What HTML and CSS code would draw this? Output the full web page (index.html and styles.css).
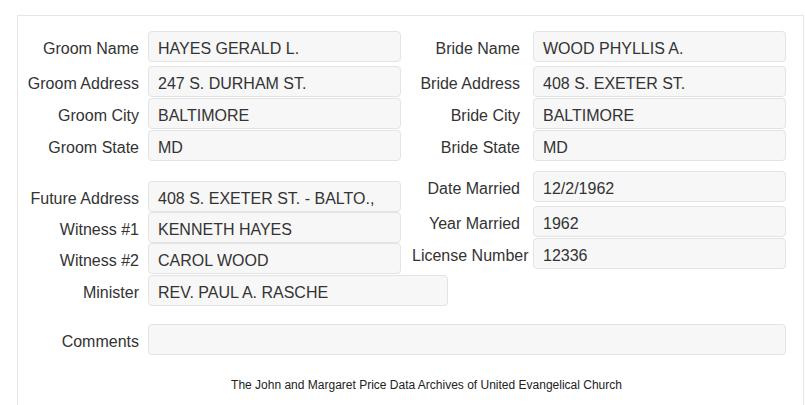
FILE: index.html
```html
<!DOCTYPE html>
<html>
<head>
<meta charset="utf-8">
<link rel="stylesheet" href="styles.css">
</head>
<body>
<div class="panel">
  <div class="section section-top">
    <div class="col col-left">
      <div class="row row-first"><div class="label">Groom Name</div><div class="value">HAYES GERALD L.</div></div>
      <div class="row"><div class="label">Groom Address</div><div class="value">247 S. DURHAM ST.</div></div>
      <div class="row"><div class="label">Groom City</div><div class="value">BALTIMORE</div></div>
      <div class="row"><div class="label">Groom State</div><div class="value">MD</div></div>
    </div>
    <div class="col col-right">
      <div class="row row-first"><div class="label">Bride Name</div><div class="value">WOOD PHYLLIS A.</div></div>
      <div class="row"><div class="label">Bride Address</div><div class="value">408 S. EXETER ST.</div></div>
      <div class="row"><div class="label">Bride City</div><div class="value">BALTIMORE</div></div>
      <div class="row"><div class="label">Bride State</div><div class="value">MD</div></div>
    </div>
  </div>
  <div class="section section-mid">
    <div class="col col-left col-offset">
      <div class="row row-tight"><div class="label">Future Address</div><div class="value">408 S. EXETER ST. - BALTO.,</div></div>
      <div class="row row-tight"><div class="label">Witness #1</div><div class="value">KENNETH HAYES</div></div>
      <div class="row"><div class="label">Witness #2</div><div class="value">CAROL WOOD</div></div>
      <div class="row"><div class="label">Minister</div><div class="value value-wide">REV. PAUL A. RASCHE</div></div>
    </div>
    <div class="col col-right">
      <div class="row row-first"><div class="label">Date Married</div><div class="value">12/2/1962</div></div>
      <div class="row"><div class="label">Year Married</div><div class="value">1962</div></div>
      <div class="row"><div class="label">License Number</div><div class="value">12336</div></div>
    </div>
  </div>
  <div class="row row-comments"><div class="label">Comments</div><div class="value value-fill"></div></div>
  <div class="footer">The John and Margaret Price Data Archives of United Evangelical Church</div>
</div>
</body>
</html>
```
FILE: styles.css
```css
html, body {
  margin: 0;
  padding: 0;
  background: #ffffff;
}
body {
  font-family: "Liberation Sans", Arial, sans-serif;
  font-size: 16px;
  color: #333333;
  overflow: hidden;
}
.panel {
  margin: 15px 1px 0 17px;
  border: 1px solid #e6e6e6;
  border-bottom: none;
  padding: 15px 17px 40px 0;
  height: 400px;
  box-sizing: border-box;
}
.section {
  display: flex;
}
.section-mid {
  margin-top: 9px;
}
.col {
  display: flex;
  flex-direction: column;
}
.col-left {
  width: 383px;
}
.col-right {
  padding-left: 11px;
}
.col-offset {
  margin-top: 10px;
}
.row {
  display: flex;
  margin-bottom: 1px;
}
.row-first {
  margin-bottom: 4px;
}
.row-tight {
  margin-bottom: 0;
}
.label {
  flex: none;
  text-align: right;
  white-space: nowrap;
  line-height: 20px;
  padding-top: 8px;
}
.col-left .label,
.row-comments .label {
  width: 121px;
  margin-right: 9px;
}
.col-right .label {
  width: 108px;
  margin-right: 13px;
}
.value {
  flex: none;
  box-sizing: border-box;
  width: 253px;
  height: 31px;
  padding: 7px 9px 2px;
  line-height: 20px;
  background: #f7f7f7;
  border: 1px solid #e3e3e3;
  border-radius: 4px;
  white-space: nowrap;
  overflow: hidden;
}
.value-wide {
  width: 300px;
}
.row-comments {
  margin-top: 17px;
}
.value-fill {
  flex: 1;
  width: auto;
}
.footer {
  margin-top: 22px;
  padding-left: 49px;
  text-align: center;
  font-size: 12px;
  line-height: 17px;
  color: #222222;
}
```
